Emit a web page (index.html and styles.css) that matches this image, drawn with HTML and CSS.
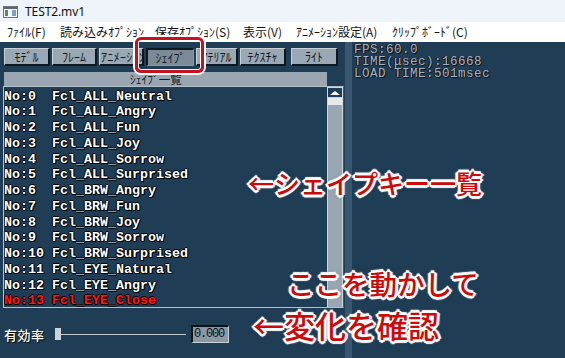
FILE: index.html
```html
<!DOCTYPE html>
<html lang="ja">
<head>
<meta charset="utf-8">
<title>TEST2.mv1</title>
<link rel="stylesheet" href="styles.css">
</head>
<body>
<div class="window">
  <div class="titlebar">
    <svg class="appicon" width="15" height="12" viewBox="0 0 15 12">
      <rect x="0.5" y="0.5" width="14" height="11" fill="#f4f6f8" stroke="#6d737a"/>
      <rect x="1" y="1" width="13" height="2" fill="#5d6670"/>
      <rect x="2" y="4" width="3" height="6" fill="#4f8f6a"/>
      <rect x="9" y="4" width="4" height="6" fill="#7f9fc4"/>
    </svg>
    <span class="title">TEST2.mv1</span>
  </div>
  <div class="menubar">
    <span class="menu m1">ﾌｧｲﾙ(F)</span>
    <span class="menu m2">読み込みｵﾌﾟｼｮﾝ</span>
    <span class="menu m3">保存ｵﾌﾟｼｮﾝ(S)</span>
    <span class="menu m4">表示(V)</span>
    <span class="menu m5">ｱﾆﾒｰｼｮﾝ設定(A)</span>
    <span class="menu m6">ｸﾘｯﾌﾟﾎﾞｰﾄﾞ(C)</span>
  </div>
  <div class="main">
    <div class="leftpanel">
      <div class="tabs">
        <div class="tab w46">ﾓﾃﾞﾙ</div>
        <div class="tab w45">ﾌﾚｰﾑ</div>
        <div class="tab w45 clip">ｱﾆﾒｰｼｮﾝ</div>
        <div class="tab w48 pressed">ｼｪｲﾌﾟ</div>
        <div class="tab w42">ﾏﾃﾘｱﾙ</div>
        <div class="tab w46">ﾃｸｽﾁｬ</div>
        <div class="tab w47 last">ﾗｲﾄ</div>
      </div>
      <div class="listhead">ｼｪｲﾌﾟ一覧</div>
      <div class="listbox">
        <div class="rows">
          <div class="row">No:0  Fcl_ALL_Neutral</div>
          <div class="row">No:1  Fcl_ALL_Angry</div>
          <div class="row">No:2  Fcl_ALL_Fun</div>
          <div class="row">No:3  Fcl_ALL_Joy</div>
          <div class="row">No:4  Fcl_ALL_Sorrow</div>
          <div class="row">No:5  Fcl_ALL_Surprised</div>
          <div class="row">No:6  Fcl_BRW_Angry</div>
          <div class="row">No:7  Fcl_BRW_Fun</div>
          <div class="row">No:8  Fcl_BRW_Joy</div>
          <div class="row">No:9  Fcl_BRW_Sorrow</div>
          <div class="row">No:10 Fcl_BRW_Surprised</div>
          <div class="row">No:11 Fcl_EYE_Natural</div>
          <div class="row">No:12 Fcl_EYE_Angry</div>
          <div class="row selected">No:13 Fcl_EYE_Close</div>
        </div>
        <div class="scrollbar">
          <div class="sb-up"><span class="tri"></span></div>
          <div class="sb-thumb"></div>
        </div>
      </div>
      <div class="sliderrow">
        <span class="slabel">有効率</span>
        <span class="thumb"></span>
        <span class="track"></span>
        <span class="valuebox">0.000</span>
      </div>
    </div>
    <div class="divider"></div>
    <div class="rightpanel">
      <div class="stats">FPS:60.0
TIME(μsec):16668
LOAD TIME:501msec</div>
    </div>
  </div>

  <div class="highlight"></div>
  <div class="note note1">←シェイプキー一覧</div>
  <div class="note note2">ここを動かして</div>
  <div class="note note3">←変化を確認</div>
</div>
</body>
</html>
```
FILE: styles.css
```css
html, body {
  margin: 0;
  padding: 0;
}
body {
  width: 565px;
  height: 358px;
  overflow: hidden;
  background: #1f3d55;
}
.window {
  position: relative;
  width: 565px;
  height: 358px;
  display: flex;
  flex-direction: column;
}
.titlebar {
  height: 22px;
  background: #eef4fa;
  display: flex;
  align-items: center;
  padding-left: 3px;
  box-sizing: border-box;
}
.appicon {
  display: block;
  margin-top: 1px;
}
.title {
  font-family: "Noto Sans", "Liberation Sans", sans-serif;
  font-size: 12px;
  color: #111;
  margin-left: 7px;
  letter-spacing: -0.1px;
}
.menubar {
  height: 20px;
  background: #ffffff;
  display: flex;
  align-items: center;
  font-family: "Noto Sans CJK JP", sans-serif;
  font-size: 12px;
  color: #111;
}
.menu {
  white-space: nowrap;
  line-height: 20px;
}
.m1 { margin-left: 7px; width: 53px; }
.m2 { width: 95px; }
.m3 { width: 88px; }
.m4 { width: 53px; }
.m5 { width: 96px; }

.main {
  flex: 1;
  display: flex;
  background: #1f3d55;
}
.leftpanel {
  width: 345px;
  display: flex;
  flex-direction: column;
}
.tabs {
  display: flex;
  gap: 2px;
  margin-top: 6px;
  margin-left: 4px;
  height: 18px;
}
.tab {
  box-sizing: border-box;
  height: 18px;
  background: #9aa8b3;
  border-top: 1px solid #c9d2d9;
  border-left: 1px solid #c9d2d9;
  border-right: 2px solid #0c1720;
  border-bottom: 2px solid #0c1720;
  font-family: "Noto Sans CJK JP", sans-serif;
  font-size: 12px;
  line-height: 15px;
  color: #15191d;
  text-align: center;
  white-space: nowrap;
  overflow: hidden;
}
.tab.clip { text-align: left; padding-left: 1px; letter-spacing: 0.3px; }
.tab.pressed {
  background: #7b8a96;
  border-top: 2px solid #0c1720;
  border-left: 2px solid #0c1720;
  border-right: 1px solid #8d9aa4;
  border-bottom: 1px solid #8d9aa4;
}
.tab.last { margin-left: 3px; }
.w42 { width: 42px; }
.w45 { width: 45px; }
.w46 { width: 46px; }
.w47 { width: 47px; }
.w48 { width: 48px; }

.listhead {
  margin-top: 6px;
  margin-left: 4px;
  width: 323px;
  height: 14px;
  background: #9aa7b2;
  font-family: "Noto Sans CJK JP", sans-serif;
  font-size: 11.5px;
  line-height: 14px;
  color: #15191d;
  padding-left: 126px;
  box-sizing: border-box;
  white-space: nowrap;
}
.listbox {
  margin-left: 3px;
  width: 341px;
  height: 222px;
  box-sizing: border-box;
  border: 1px solid #b5c1ca;
  border-right-color: #3a5570;
  display: flex;
  overflow: hidden;
}
.rows {
  flex: 1;
  padding-top: 1.5px;
  overflow: hidden;
}
.row {
  font-family: "Liberation Mono", "DejaVu Sans Mono", monospace;
  font-size: 13.33px;
  font-weight: bold;
  line-height: 15.75px;
  height: 15.75px;
  white-space: pre;
  color: #ffffff;
  text-shadow: 1px 1px 0 #000, -1px 0 0 #000, 0 -1px 0 #000, 1px 0 0 #000, 0 1px 0 #000;
}
.row.selected {
  color: #ff1a1a;
  text-shadow: 1px 1px 0 #1a0000, -1px 0 0 #1a0000, 0 -1px 0 #1a0000, 1px 0 0 #1a0000, 0 1px 0 #1a0000;
}
.scrollbar {
  width: 16px;
  box-sizing: border-box;
  background: #9aa7b2;
  border: 1px solid #cfd7dd;
  border-bottom: none;
  display: flex;
  flex-direction: column;
}
.sb-up {
  height: 9px;
  background: #1f3d55;
  border-bottom: 1px solid #cfd7dd;
  display: flex;
  align-items: center;
  justify-content: center;
}
.tri {
  width: 0;
  height: 0;
  border-left: 5px solid transparent;
  border-right: 5px solid transparent;
  border-bottom: 4px solid #ffffff;
}
.sb-thumb {
  height: 7px;
  background: #e6eaed;
}

.sliderrow {
  margin-top: 17px;
  height: 18px;
  display: flex;
  align-items: center;
}
.slabel {
  margin-left: 4px;
  font-family: "Noto Sans CJK JP", sans-serif;
  font-size: 13px;
  font-weight: 500;
  color: #ffffff;
  text-shadow: 1px 1px 0 #000;
  width: 51px;
  letter-spacing: 0.5px;
}
.thumb {
  width: 6px;
  height: 12px;
  background: #ccd4da;
}
.track {
  width: 125px;
  height: 1px;
  background: #c3cbd1;
}
.valuebox {
  margin-left: 5px;
  width: 38px;
  height: 18px;
  box-sizing: border-box;
  background: #8a99a5;
  border-top: 2px solid #0b141b;
  border-left: 2px solid #0b141b;
  border-right: 1px solid #c8d0d6;
  border-bottom: 1px solid #c8d0d6;
  font-family: "Liberation Mono", monospace;
  font-size: 12px;
  letter-spacing: -1.2px;
  line-height: 15px;
  color: #0d0f12;
  padding-left: 1px;
}

.divider {
  width: 7px;
  background: #3a5771;
}
.rightpanel {
  flex: 1;
  padding-top: 2px;
  padding-left: 2px;
}
.stats {
  font-family: "Liberation Mono", "DejaVu Sans Mono", monospace;
  font-size: 12.5px;
  letter-spacing: 0.5px;
  line-height: 12px;
  color: #a9b3bb;
  white-space: pre;
  text-shadow: 1px 1px 0 #0a1520, -1px 0 0 #0a1520;
}

.highlight {
  position: absolute;
  left: 135px;
  top: 37px;
  width: 69px;
  height: 36px;
  box-sizing: border-box;
  border: 3px solid #c8101e;
  border-radius: 6px;
  box-shadow: 0 0 0 2px #ffffff, inset 0 0 0 1px #ffffff;
}
.note {
  position: absolute;
  font-family: "Noto Sans CJK JP", sans-serif;
  font-weight: 500;
  color: #cc0a0a;
  line-height: 1;
  white-space: nowrap;
  text-shadow:
    2px 0 0 #fff, -2px 0 0 #fff, 0 2px 0 #fff, 0 -2px 0 #fff,
    1.5px 1.5px 0 #fff, -1.5px 1.5px 0 #fff, 1.5px -1.5px 0 #fff, -1.5px -1.5px 0 #fff,
    3px 0 1px #fff, -3px 0 1px #fff, 0 3px 1px #fff, 0 -3px 1px #fff,
    0 0 5px rgba(0,0,0,0.6);
}
.note1 { left: 248px; top: 170px; font-size: 26px; }
.note2 { left: 287px; top: 270px; font-size: 27.5px; }
.note3 { left: 253px; top: 309px; font-size: 31px; }
```
